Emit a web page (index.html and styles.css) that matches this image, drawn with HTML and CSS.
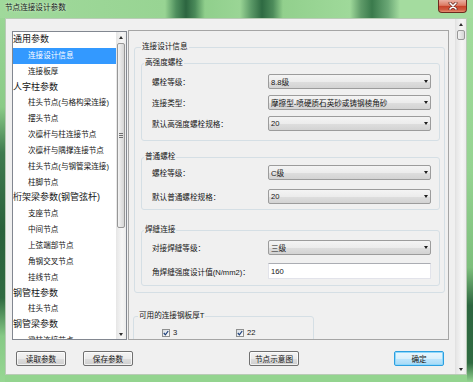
FILE: index.html
```html
<!DOCTYPE html>
<html lang="zh-CN">

<head>
    <meta charset="UTF-8">
    <title>节点连接设计参数</title>
    <link rel="stylesheet" href="styles.css">
</head>

<body>
<div class="window">
    <div class="titlebar">
        <span class="title">节点连接设计参数</span>
        <div class="close">
            <svg width="10" height="8" viewBox="0 0 10 8">
                <path d="M2 1 L8 7 M8 1 L2 7" stroke="#6a2a1e" stroke-width="3" stroke-linecap="round" fill="none"/>
                <path d="M2 1 L8 7 M8 1 L2 7" stroke="#fff" stroke-width="1.6" stroke-linecap="round" fill="none"/>
            </svg>
        </div>
    </div>

    <div class="client">
        <div class="content">
            <div class="panes">
                <div class="tree">
                    <ul class="tree-list">
                        <li class="lv0">通用参数</li>
                        <li class="selected">连接设计信息</li>
                        <li>连接板厚</li>
                        <li class="lv0">人字柱参数</li>
                        <li>柱头节点(与格构梁连接)</li>
                        <li>摆头节点</li>
                        <li>次檩杆与柱连接节点</li>
                        <li>次檩杆与隅撑连接节点</li>
                        <li>柱头节点(与钢管梁连接)</li>
                        <li>柱脚节点</li>
                        <li class="lv0">桁架梁参数(钢管弦杆)</li>
                        <li>支座节点</li>
                        <li>中间节点</li>
                        <li>上弦端部节点</li>
                        <li>角钢交叉节点</li>
                        <li>挂线节点</li>
                        <li class="lv0">钢管柱参数</li>
                        <li>柱头节点</li>
                        <li class="lv0">钢管梁参数</li>
                        <li>梁柱连接节点</li>
                    </ul>
                    <div class="scrollbar">
                        <span class="arrow up"></span>
                        <span class="thumb tree-thumb"><span class="grip"></span></span>
                        <span class="spacer"></span>
                        <span class="arrow down"></span>
                    </div>
                </div>

                <div class="form-pane">
                    <div class="group outer">
                        <div class="group-title">连接设计信息</div>

                        <div class="group g1">
                            <div class="group-title">高强度螺栓</div>
                            <div class="rows">
                                <span>螺栓等级：</span>
                                <div class="select"><span class="value">8.8级</span></div>
                                <span>连接类型：</span>
                                <div class="select"><span class="value">摩擦型-喷硬质石英砂或铸钢棱角砂</span></div>
                                <span>默认高强度螺栓规格：</span>
                                <div class="select"><span class="value">20</span></div>
                            </div>
                        </div>

                        <div class="group g2">
                            <div class="group-title">普通螺栓</div>
                            <div class="rows">
                                <span>螺栓等级：</span>
                                <div class="select"><span class="value">C级</span></div>
                                <span>默认普通螺栓规格：</span>
                                <div class="select"><span class="value">20</span></div>
                            </div>
                        </div>

                        <div class="group g3">
                            <div class="group-title">焊缝连接</div>
                            <div class="rows">
                                <span>对接焊缝等级：</span>
                                <div class="select"><span class="value">三级</span></div>
                                <span>角焊缝强度设计值(N/mm2)：</span>
                                <div class="input">160</div>
                            </div>
                        </div>
                    </div>

                    <div class="group g4">
                        <div class="group-title">可用的连接钢板厚T</div>
                        <div class="checks">
                            <label class="check-item">
                                <span class="check"><svg width="6" height="6" viewBox="0 0 6 6"><path d="M0.8 3 L2.4 4.8 L5.2 1" stroke="#1d3f7a" stroke-width="1.2" fill="none"/></svg></span>3
                            </label>
                            <label class="check-item">
                                <span class="check"><svg width="6" height="6" viewBox="0 0 6 6"><path d="M0.8 3 L2.4 4.8 L5.2 1" stroke="#1d3f7a" stroke-width="1.2" fill="none"/></svg></span>22
                            </label>
                        </div>
                    </div>
                </div>
            </div>

            <div class="buttons">
                <div class="btn">读取参数</div>
                <div class="btn btn-save">保存参数</div>
                <div class="btn btn-diagram">节点示意图</div>
                <div class="btn btn-ok">确定</div>
            </div>
        </div>

        <div class="scrollbar page-scroll">
            <span class="arrow up"></span>
            <span class="thumb page-thumb"></span>
            <span class="spacer"></span>
            <span class="arrow down"></span>
        </div>
    </div>
</div>
</body>

</html>
```

FILE: styles.css
```css
html, body {
    margin: 0;
    height: 100%;
    overflow: hidden;
}

body {
    font-family: "Liberation Sans", "Noto Sans CJK SC", sans-serif;
    font-size: 7.6px;
    color: #151515;
}

/* window frame */
.window {
    width: 473px;
    height: 382px;
    display: flex;
    flex-direction: column;
    background:
        linear-gradient(to bottom, #9cd897 0, #8acb87 28%, #3f7b4f 40%, #2a613b 60%, #2f6a40 78%, #86c985 88%, #97d793 100%) 0 0 / 5px 100% no-repeat,
        linear-gradient(to bottom, #a2dc9d 0, #95d391 45%, #7dbf7c 70%, #2d6640 80%, #2f6b41 95%, #94d591 100%) 100% 0 / 6px 100% no-repeat,
        #93d48f;
}

.titlebar {
    height: 18px;
    display: flex;
    align-items: flex-start;
    background: linear-gradient(to right, #a0d99b 0, #98d493 165px, #4f8f5e 176px, #2c6540 186px, #4a8a59 195px, #90cf8c 205px, #9ad595 240px, #5c9a68 251px, #2e6a42 262px, #4d8c5b 273px, #92d08d 283px, #9fd99a 350px, #5f9b69 361px, #3a7a4c 372px, #6aa775 388px, #a4dc9f 400px, #a4dc9f 100%);
}

.title {
    padding-left: 5px;
    line-height: 16px;
    color: #1b1b1b;
    text-shadow: 0 0 3px rgba(255, 255, 255, 0.8);
}

.close {
    width: 29px;
    height: 13px;
    margin-left: auto;
    margin-right: 6px;
    box-sizing: border-box;
    border: 1px solid #6f2a1e;
    border-top: none;
    border-radius: 0 0 4px 4px;
    background: linear-gradient(#eab0a2, #dc7a63 45%, #c8432a 52%, #cf5a40 80%, #e58f74);
    display: flex;
    align-items: center;
    justify-content: center;
}

.client {
    flex: 1;
    margin: 0 6px 7px 5px;
    border: 1px solid #b9cbb6;
    background: #f0f0f0;
    display: flex;
    min-height: 0;
}

.content {
    flex: 1;
    padding: 11px 0 0 6px;
    display: flex;
    flex-direction: column;
}

.panes {
    display: flex;
    height: 310px;
}

/* tree list */
.tree {
    width: 115px;
    height: 309px;
    margin-top: 1px;
    box-sizing: border-box;
    border: 1px solid #828790;
    background: #fff;
    display: flex;
}

.tree-list {
    flex: 1;
    list-style: none;
    margin: 0;
    padding: 0;
    overflow: hidden;
}

.tree-list li {
    height: 15.85px;
    line-height: 15.85px;
    padding-left: 15px;
    white-space: nowrap;
}

.tree-list li.lv0 {
    padding-left: 0;
    font-size: 9px;
}

.tree-list li.selected {
    background: #3399ff;
    color: #fff;
}

/* scrollbars */
.scrollbar {
    width: 10px;
    display: flex;
    flex-direction: column;
    background: linear-gradient(to right, #e6e6e6, #f6f6f6 60%, #ececec);
}

.arrow {
    height: 10px;
    flex: none;
    display: flex;
    align-items: center;
    justify-content: center;
}

.arrow::before {
    content: "";
    border-left: 2px solid transparent;
    border-right: 2px solid transparent;
}

.arrow.up::before {
    border-bottom: 3px solid #303030;
}

.arrow.down::before {
    border-top: 3px solid #303030;
}

.thumb {
    flex: none;
    margin: 1px 1px 0;
    box-sizing: border-box;
    border: 1px solid #979797;
    border-radius: 2px;
    background: linear-gradient(to right, #f4f4f4, #e4e4e4 50%, #d6d6d6);
    display: flex;
    align-items: center;
    justify-content: center;
}

.tree-thumb {
    height: 185px;
}

.grip {
    width: 4px;
    height: 5px;
    background: repeating-linear-gradient(#6f6f6f 0 1px, transparent 1px 2px);
}

.spacer {
    flex: 1;
}

.page-scroll {
    border-left: 1px solid #e2e2e2;
}

.page-thumb {
    height: 10px;
}

/* right side form */
.form-pane {
    width: 321px;
    height: 310px;
    margin-left: 1px;
    box-sizing: border-box;
    border: 1px solid #a5a5a5;
    overflow: hidden;
}

.group {
    border: 1px solid #d5dfe5;
    border-radius: 3px;
}

.group-title {
    width: fit-content;
    height: 10px;
    line-height: 10px;
    margin: -6px 0 0 2px;
    padding: 0 1px;
    background: #f0f0f0;
    white-space: nowrap;
}

.outer {
    margin: 16px 3px 0 5px;
    padding: 0 4px 6px 6px;
}

.outer > .group-title {
    margin-left: 0;
}

.g1 {
    margin-top: 11px;
}

.g2 {
    margin-top: 16px;
}

.g3 {
    margin-top: 20px;
}

.rows {
    display: grid;
    grid-template-columns: 116px 163px;
    align-items: center;
    padding-left: 10px;
}

.g1 .rows {
    margin-top: 6px;
    row-gap: 6px;
    padding-bottom: 9px;
}

.g2 .rows {
    margin-top: 3px;
    row-gap: 9px;
    padding-bottom: 5px;
}

.g3 .rows {
    margin-top: 5px;
    row-gap: 8px;
    padding-bottom: 6px;
}

.rows > span {
    white-space: nowrap;
}

.select {
    height: 15px;
    box-sizing: border-box;
    border: 1px solid #9c9c9c;
    border-radius: 2px;
    background: linear-gradient(#f4f4f4, #ececec 50%, #dedede 52%, #d3d3d3);
    display: flex;
    align-items: center;
    padding: 0 2px 0 2px;
    white-space: nowrap;
}

.select .value {
    flex: 1;
    overflow: hidden;
}

.select::after {
    content: "";
    border-left: 2px solid transparent;
    border-right: 2px solid transparent;
    border-top: 3px solid #1e1e1e;
}

.input {
    height: 16px;
    box-sizing: border-box;
    border: 1px solid #e2e3ea;
    border-top-color: #abadb3;
    background: #fff;
    padding-left: 2px;
    display: flex;
    align-items: center;
}

.g4 {
    width: 181px;
    height: 60px;
    box-sizing: border-box;
    margin: 23px 0 0 4px;
}

.g4 > .group-title {
    margin-left: 4px;
}

.checks {
    display: flex;
    margin-top: 8px;
    padding-left: 28px;
}

.check-item {
    width: 74px;
    display: flex;
    align-items: center;
    line-height: 8px;
}

.check {
    width: 8px;
    height: 8px;
    box-sizing: border-box;
    margin-right: 3px;
    border: 1px solid #8e8f8f;
    background: linear-gradient(135deg, #d8dde3, #fbfbfb);
    display: flex;
    align-items: center;
    justify-content: center;
}

/* bottom buttons */
.buttons {
    display: flex;
    margin-top: 11px;
    padding-left: 4px;
}

.btn {
    width: 50px;
    height: 15px;
    box-sizing: border-box;
    border: 1px solid #707070;
    border-radius: 2px;
    background: linear-gradient(#f3f3f3, #ebebeb 50%, #dddddd 52%, #cfcfcf);
    box-shadow: inset 0 0 0 1px rgba(255, 255, 255, 0.7);
    display: flex;
    align-items: center;
    justify-content: center;
}

.btn-save {
    margin-left: 17px;
}

.btn-diagram {
    margin-left: 116px;
}

.btn-ok {
    margin-left: 95px;
    border-color: #2c9fe0;
    background: linear-gradient(#eaf6fd, #d9f0fc 50%, #bee6fd 52%, #a7d9f5);
    box-shadow: inset 0 0 0 1px #8fd8fb;
}
```
